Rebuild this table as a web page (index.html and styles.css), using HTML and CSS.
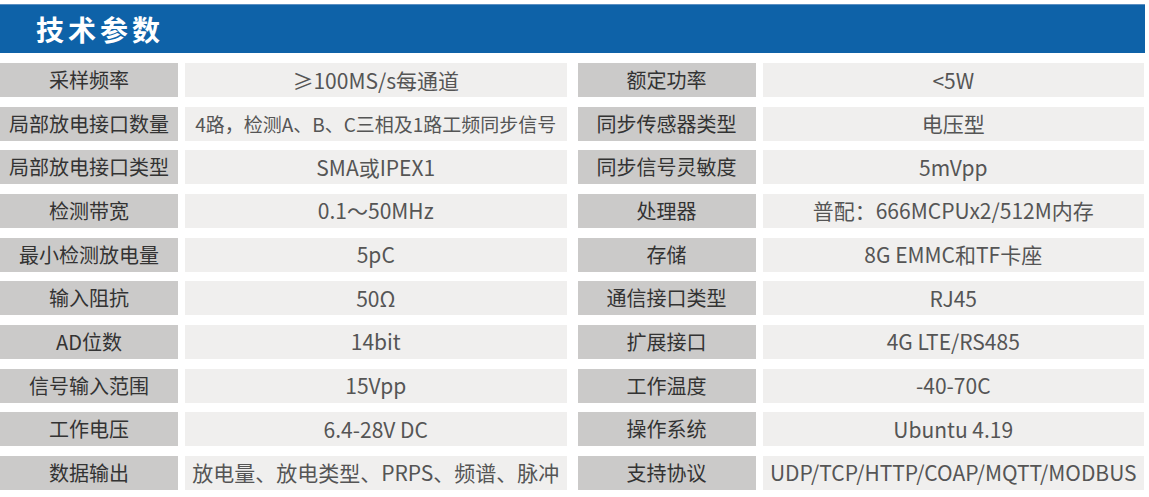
FILE: index.html
```html
<!DOCTYPE html>
<html lang="zh-CN">
<head>
<meta charset="utf-8">
<title>技术参数</title>
<link rel="stylesheet" href="styles.css">
</head>
<body>
<div class="page">
  <div class="header"><h1 class="title">技术参数</h1></div>
  <div class="table">
    <div class="half">
      <div class="label">采样频率</div><div class="value">≥100MS/s每通道</div>
      <div class="label">局部放电接口数量</div><div class="value small">4路，检测A、B、C三相及1路工频同步信号</div>
      <div class="label">局部放电接口类型</div><div class="value">SMA或IPEX1</div>
      <div class="label">检测带宽</div><div class="value">0.1～50MHz</div>
      <div class="label">最小检测放电量</div><div class="value">5pC</div>
      <div class="label">输入阻抗</div><div class="value">50Ω</div>
      <div class="label">AD位数</div><div class="value">14bit</div>
      <div class="label">信号输入范围</div><div class="value">15Vpp</div>
      <div class="label">工作电压</div><div class="value">6.4-28V DC</div>
      <div class="label">数据输出</div><div class="value">放电量、放电类型、PRPS、频谱、脉冲</div>
    </div>
    <div class="half">
      <div class="label">额定功率</div><div class="value">&lt;5W</div>
      <div class="label">同步传感器类型</div><div class="value">电压型</div>
      <div class="label">同步信号灵敏度</div><div class="value">5mVpp</div>
      <div class="label">处理器</div><div class="value">普配：666MCPUx2/512M内存</div>
      <div class="label">存储</div><div class="value">8G EMMC和TF卡座</div>
      <div class="label">通信接口类型</div><div class="value">RJ45</div>
      <div class="label">扩展接口</div><div class="value">4G LTE/RS485</div>
      <div class="label">工作温度</div><div class="value">-40-70C</div>
      <div class="label">操作系统</div><div class="value">Ubuntu 4.19</div>
      <div class="label">支持协议</div><div class="value">UDP/TCP/HTTP/COAP/MQTT/MODBUS</div>
    </div>
  </div>
</div>
</body>
</html>
```

FILE: styles.css
```css
* { box-sizing: border-box; }
html, body {
  margin: 0;
  padding: 0;
  background: #ffffff;
}
body {
  font-family: "Noto Sans CJK SC", "Noto Sans", sans-serif;
}
.page {
  width: 1145px;
  padding-top: 4px;
}
.header {
  height: 49px;
  background: #0e62a8;
  border-top: 1px solid #5b8fc2;
  display: flex;
  align-items: center;
  padding-left: 36px;
}
.title {
  margin: 0;
  font-size: 28px;
  font-weight: 700;
  color: #ffffff;
  letter-spacing: 4px;
  line-height: 1;
}
.table {
  margin-top: 10px;
  display: flex;
  gap: 11px;
  width: 1144px;
}
.half {
  flex: 1 1 0;
  display: grid;
  grid-template-columns: 178px 1fr;
  grid-auto-rows: 34px;
  row-gap: 9.67px;
  column-gap: 7px;
}
.label, .value {
  display: flex;
  align-items: center;
  justify-content: center;
  white-space: nowrap;
  line-height: 1;
}
.label {
  background: #cbcac9;
  color: #333333;
  font-size: 20px;
}
.value {
  background: #f0efee;
  color: #555555;
  font-size: 21px;
}
.value.small {
  font-size: 19px;
}
```
